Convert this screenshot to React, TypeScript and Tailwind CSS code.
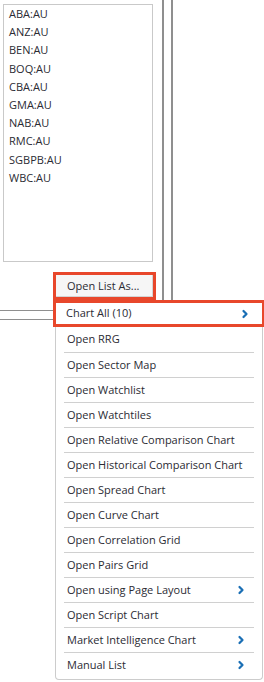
import { ChevronRight } from 'lucide-react';

const symbols = ['ABA:AU', 'ANZ:AU', 'BEN:AU', 'BOQ:AU', 'CBA:AU', 'GMA:AU', 'NAB:AU', 'RMC:AU', 'SGBPB:AU', 'WBC:AU'];

const items: { label: string; sub?: boolean }[] = [
    { label: 'Open RRG' },
    { label: 'Open Sector Map' },
    { label: 'Open Watchlist' },
    { label: 'Open Watchtiles' },
    { label: 'Open Relative Comparison Chart' },
    { label: 'Open Historical Comparison Chart' },
    { label: 'Open Spread Chart' },
    { label: 'Open Curve Chart' },
    { label: 'Open Correlation Grid' },
    { label: 'Open Pairs Grid' },
    { label: 'Open using Page Layout', sub: true },
    { label: 'Open Script Chart' },
    { label: 'Market Intelligence Chart', sub: true },
    { label: 'Manual List', sub: true },
];

function Chevron() {
    return <ChevronRight className="h-[12px] w-[12px] text-[#1a6fb5]" strokeWidth={4.5} />;
}

export default function App() {
    return (
        <div
            className="relative w-[264px] h-[682px] bg-white overflow-hidden text-[#2b2b33]"
            style={{ fontFamily: '"Open Sans", "Noto Sans", sans-serif' }}
        >
            {/* Background panels */}
            <div className="flex flex-col h-full">
                <div className="flex h-[311px]">
                    <div className="w-[164px] border-r-2 border-b border-[#8f8f8f] pl-[3px] pt-[4px]">
                        <div className="w-[150px] h-[258px] border border-[#c9c9c9] pl-[5px] pt-0">
                            {symbols.map((s) => (
                                <div key={s} className="h-[18.2px] leading-[18px] text-[11px] whitespace-nowrap">
                                    {s}
                                </div>
                            ))}
                        </div>
                    </div>
                    <div className="w-[7px]" />
                    <div className="flex-1 border-l-2 border-[#8f8f8f]" />
                </div>
                <div className="h-[8px]" />
                <div className="flex-1 border-t border-[#8f8f8f]" />
            </div>

            {/* Context menu overlay */}
            <div className="absolute left-[53px] top-[272px] w-[211px]">
                <div className="w-[103px] h-[28px] border-[3px] border-[#e8472b] bg-white">
                    <div className="h-full bg-[#f6f6f6] border-r border-b border-[#d4d4d4] pl-[11px] text-[11px] leading-[21px] whitespace-nowrap">
                        Open List As...
                    </div>
                </div>
                <div className="ml-[2px] w-[208px] bg-white border border-t-0 border-[#cccccc] rounded-b-[4px] pb-[2px]">
                    <div className="-ml-[3px] -mr-[3px] h-[27px] border-[3px] border-[#e8472b] flex items-center justify-between pl-[10px] pr-[11px] text-[11px]">
                        <span className="whitespace-nowrap">Chart All (10)</span>
                        <Chevron />
                    </div>
                    <div className="px-[8px]">
                        {items.map((it, i) => (
                            <div
                                key={it.label}
                                className={`h-[25px] flex items-center justify-between pl-[3px] pr-[7px] text-[11px] ${i > 0 ? 'border-t border-[#d0d0d0]' : ''}`}
                            >
                                <span className="whitespace-nowrap">{it.label}</span>
                                {it.sub && <Chevron />}
                            </div>
                        ))}
                    </div>
                </div>
            </div>
        </div>
    );
}
